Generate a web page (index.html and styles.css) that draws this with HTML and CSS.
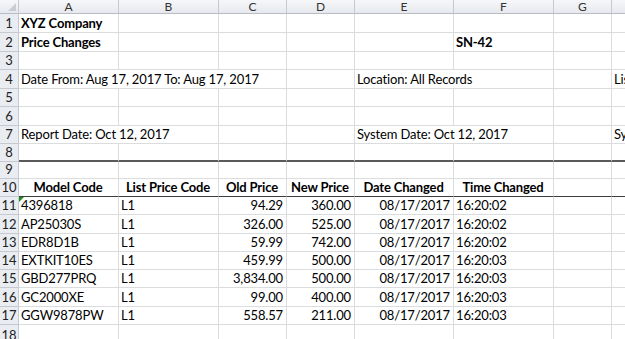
FILE: index.html
```html
<!DOCTYPE html>
<html>
<head>
<meta charset="utf-8">
<link rel="stylesheet" href="styles.css">
</head>
<body>
<div class="sheet">
  <div class="row colhead">
    <div class="corner"><span class="corner-tri"></span></div>
    <div class="ch">A</div><div class="ch">B</div><div class="ch">C</div><div class="ch">D</div><div class="ch">E</div><div class="ch">F</div><div class="ch">G</div><div class="ch"></div>
  </div>
  <div class="row r1">
    <div class="rh">1</div>
    <div class="c b">XYZ Company</div><div class="c"></div><div class="c"></div><div class="c"></div><div class="c"></div><div class="c"></div><div class="c"></div><div class="c"></div>
  </div>
  <div class="row r2">
    <div class="rh">2</div>
    <div class="c b">Price Changes</div><div class="c"></div><div class="c"></div><div class="c"></div><div class="c"></div><div class="c b">SN-42</div><div class="c"></div><div class="c"></div>
  </div>
  <div class="row r3">
    <div class="rh">3</div>
    <div class="c"></div><div class="c"></div><div class="c"></div><div class="c"></div><div class="c"></div><div class="c"></div><div class="c"></div><div class="c"></div>
  </div>
  <div class="row r4">
    <div class="rh">4</div>
    <div class="c span3">Date From: Aug 17, 2017 To: Aug 17, 2017</div><div class="c"></div><div class="c span2">Location: All Records</div><div class="c"></div><div class="c">List Price Code</div>
  </div>
  <div class="row r5">
    <div class="rh">5</div>
    <div class="c"></div><div class="c"></div><div class="c"></div><div class="c"></div><div class="c"></div><div class="c"></div><div class="c"></div><div class="c"></div>
  </div>
  <div class="row r6">
    <div class="rh">6</div>
    <div class="c"></div><div class="c"></div><div class="c"></div><div class="c"></div><div class="c"></div><div class="c"></div><div class="c"></div><div class="c"></div>
  </div>
  <div class="row r7">
    <div class="rh">7</div>
    <div class="c span2">Report Date: Oct 12, 2017</div><div class="c"></div><div class="c"></div><div class="c span2">System Date: Oct 12, 2017</div><div class="c"></div><div class="c">System User</div>
  </div>
  <div class="row r8 thick">
    <div class="rh">8</div>
    <div class="c"></div><div class="c"></div><div class="c"></div><div class="c"></div><div class="c"></div><div class="c"></div><div class="c"></div><div class="c"></div>
  </div>
  <div class="row r9">
    <div class="rh">9</div>
    <div class="c"></div><div class="c"></div><div class="c"></div><div class="c"></div><div class="c"></div><div class="c"></div><div class="c"></div><div class="c"></div>
  </div>
  <div class="row r10 dark">
    <div class="rh">10</div>
    <div class="c b ctr">Model Code</div><div class="c b ctr">List Price Code</div><div class="c b ctr">Old Price</div><div class="c b ctr">New Price</div><div class="c b ctr">Date Changed</div><div class="c b ctr">Time Changed</div><div class="c"></div><div class="c"></div>
  </div>
  <div class="row r11">
    <div class="rh">11</div>
    <div class="c txtnum">4396818</div><div class="c">L1</div><div class="c num">94.29</div><div class="c num">360.00</div><div class="c num">08/17/2017</div><div class="c">16:20:02</div><div class="c"></div><div class="c"></div>
  </div>
  <div class="row r12">
    <div class="rh">12</div>
    <div class="c">AP25030S</div><div class="c">L1</div><div class="c num">326.00</div><div class="c num">525.00</div><div class="c num">08/17/2017</div><div class="c">16:20:02</div><div class="c"></div><div class="c"></div>
  </div>
  <div class="row r13">
    <div class="rh">13</div>
    <div class="c">EDR8D1B</div><div class="c">L1</div><div class="c num">59.99</div><div class="c num">742.00</div><div class="c num">08/17/2017</div><div class="c">16:20:02</div><div class="c"></div><div class="c"></div>
  </div>
  <div class="row r14">
    <div class="rh">14</div>
    <div class="c">EXTKIT10ES</div><div class="c">L1</div><div class="c num">459.99</div><div class="c num">500.00</div><div class="c num">08/17/2017</div><div class="c">16:20:03</div><div class="c"></div><div class="c"></div>
  </div>
  <div class="row r15">
    <div class="rh">15</div>
    <div class="c">GBD277PRQ</div><div class="c">L1</div><div class="c num">3,834.00</div><div class="c num">500.00</div><div class="c num">08/17/2017</div><div class="c">16:20:03</div><div class="c"></div><div class="c"></div>
  </div>
  <div class="row r16">
    <div class="rh">16</div>
    <div class="c">GC2000XE</div><div class="c">L1</div><div class="c num">99.00</div><div class="c num">400.00</div><div class="c num">08/17/2017</div><div class="c">16:20:03</div><div class="c"></div><div class="c"></div>
  </div>
  <div class="row r17">
    <div class="rh">17</div>
    <div class="c">GGW9878PW</div><div class="c">L1</div><div class="c num">558.57</div><div class="c num">211.00</div><div class="c num">08/17/2017</div><div class="c">16:20:03</div><div class="c"></div><div class="c"></div>
  </div>
  <div class="row r18">
    <div class="rh">18</div>
    <div class="c"></div><div class="c"></div><div class="c"></div><div class="c"></div><div class="c"></div><div class="c"></div><div class="c"></div><div class="c"></div>
  </div>
</div>
</body>
</html>
```
FILE: styles.css
```css
html, body {
  margin: 0;
  padding: 0;
  background: #ffffff;
  overflow: hidden;
}
.sheet {
  width: 625px;
  height: 339px;
  overflow: hidden;
  font-family: Lato, "Liberation Sans", sans-serif;
  font-size: 13px;
  letter-spacing: -0.15px;
  color: #000;
}
.row {
  display: grid;
  grid-template-columns: 19px 100px 100px 68px 68px 99px 100px 58px 200px;
  height: 18px;
}
.r1, .r2, .r4, .r6, .r12, .r16 { height: 19px; }
.r9 { height: 17px; }
.r18 { height: 20px; }
.colhead { height: 14px; }

.c, .rh, .ch, .corner {
  box-sizing: border-box;
  border-right: 1px solid #dadcdd;
  border-bottom: 1px solid #dadcdd;
  overflow: hidden;
  white-space: nowrap;
  display: flex;
  align-items: flex-end;
  line-height: 16px;
  padding: 0 3px 1px 2px;
}
.c { overflow: visible; }
.span2 { grid-column: span 2; }
.span3 { grid-column: span 3; }
.b { font-weight: bold; }
.ctr { justify-content: center; }
.num { justify-content: flex-end; }
.txtnum { position: relative; }
.txtnum::before {
  content: "";
  position: absolute;
  left: 0;
  top: 0;
  border-top: 5px solid #1e8c1e;
  border-right: 5px solid transparent;
}

.colhead .ch, .colhead .corner {
  background: linear-gradient(#f6f7f9, #e6e9ee);
  border-right: 1px solid #c6cad0;
  border-bottom: 1px solid #b9bdc3;
  justify-content: center;
  align-items: center;
  font-size: 12px;
  line-height: 12px;
  color: #333;
  padding: 0;
  letter-spacing: 0;
}
.corner { position: relative; }
.corner-tri {
  position: absolute;
  right: 2px;
  bottom: 2px;
  border-bottom: 8px solid #c9ccd1;
  border-left: 8px solid transparent;
}
.rh {
  background: #e9ecf0;
  border-right: 1px solid #c6cad0;
  border-bottom: 1px solid #c6cad0;
  justify-content: center;
  padding: 0 0 1px 0;
  color: #222;
  font-size: 13px;
  letter-spacing: 0;
}
.thick .c { border-bottom: 2px solid #5a5a5a; }
.dark .c { border-bottom: 1px solid #3c3c3c; }
```
